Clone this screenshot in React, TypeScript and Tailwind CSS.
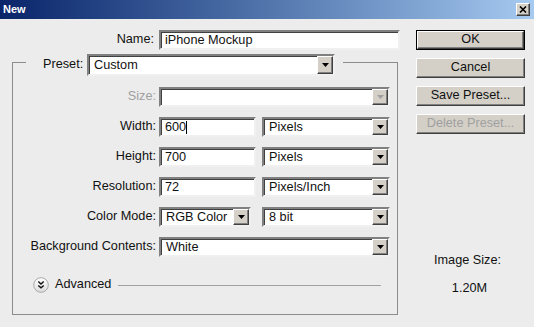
import React from 'react';

const sunken =
  'bg-white border-2 border-t-[#808080] border-l-[#808080] border-b-[#f0f0f0] border-r-[#f0f0f0] shadow-[inset_1px_1px_0_#404040]';

const raised =
  'bg-[#d4d0c8] border border-t-white border-l-white border-b-[#404040] border-r-[#404040] shadow-[inset_-1px_-1px_0_#808080]';

const Arrow: React.FC<{ disabled?: boolean }> = ({ disabled }) => (
  <div className={`w-[16px] self-stretch flex items-center justify-center ${raised}`}>
    <svg width="7" height="4" viewBox="0 0 7 4">
      <path d="M0 0 H7 L3.5 4 Z" fill={disabled ? '#a0a0a0' : '#000'} />
    </svg>
  </div>
);

const Select: React.FC<{ value?: string; width: string; disabled?: boolean; tall?: boolean }> = ({
  value,
  width,
  disabled,
  tall
}) => (
  <div
    className={`${width} ${tall ? 'h-[22px]' : 'h-[20px]'} flex items-stretch ${sunken} ${
      disabled ? 'bg-[#ececec]' : ''
    }`}
  >
    <div className="flex-1 flex items-center pl-[5px] leading-none">{value}</div>
    <Arrow disabled={disabled} />
  </div>
);

const Input: React.FC<{ value: string; width: string; cursor?: boolean }> = ({ value, width, cursor }) => (
  <div className={`${width} h-[20px] flex items-center pl-[4px] leading-none ${sunken}`}>
    {value}
    {cursor && <span className="inline-block w-px h-[13px] bg-black" />}
  </div>
);

const Row: React.FC<{ label: string; disabled?: boolean; children: React.ReactNode }> = ({
  label,
  disabled,
  children
}) => (
  <div className="flex items-center h-[20px]">
    <div className={`w-[146px] text-right pr-[3px] ${disabled ? 'text-[#a0a0a0]' : ''}`}>{label}</div>
    {children}
  </div>
);

const Button: React.FC<{ label: string; disabled?: boolean; def?: boolean }> = ({ label, disabled, def }) => {
  const inner = (
    <div
      className={`flex-1 flex items-center justify-center ${raised} ${disabled ? 'text-[#a0a0a0]' : ''}`}
    >
      {label}
    </div>
  );
  if (def) {
    return <div className="h-[20px] flex border border-black">{inner}</div>;
  }
  return <div className="h-[20px] flex">{inner}</div>;
};

export default function App() {
  return (
    <div className="w-[534px] h-[327px] bg-[#ececec] flex flex-col font-['Liberation_Sans',Arial,sans-serif] text-[12.7px] text-[#111] overflow-hidden">
      {/* Title bar */}
      <div className="h-[19px] flex items-center justify-between bg-gradient-to-r from-[#0a246a] to-[#a6caf0] pl-[3px] pr-[4px]">
        <span className="text-white font-bold text-[11px]">New</span>
        <div className={`w-[14px] h-[13px] flex items-center justify-center ${raised}`}>
          <svg width="8" height="7" viewBox="0 0 8 7">
            <path d="M1 0.5 L7 6.5 M7 0.5 L1 6.5" stroke="#000" strokeWidth="1.6" />
          </svg>
        </div>
      </div>

      <div className="flex flex-1 pt-[11px]">
        {/* Left column */}
        <div className="w-[400px] pl-[12px] flex flex-col">
          <div className="flex items-center h-[20px]">
            <div className="w-[147px] text-right pr-[5px]">Name:</div>
            <Input value="iPhone Mockup" width="w-[241px]" />
          </div>

          {/* Preset group */}
          <div className="mt-[4px] w-[386px] flex flex-col">
            <div className="h-[22px] flex items-start">
              <div className="w-[14px] h-[14px] mt-[8px] border-t border-l border-[#8c8c8c]" />
              <div className="h-[22px] flex items-center ml-[17px] w-[44px]">Preset:</div>
              <Select value="Custom" width="w-[248px]" tall />
              <div className="flex-1 h-[14px] mt-[8px] ml-[8px] border-t border-r border-[#8c8c8c]" />
            </div>
            <div className="h-[239px] border-l border-r border-b border-[#8c8c8c] pt-[11px] flex flex-col">
              <div className="flex flex-col gap-[10px]">
                <Row label="Size:" disabled>
                  <Select width="w-[231px]" disabled />
                </Row>
                <Row label="Width:">
                  <Input value="600" width="w-[97px]" cursor />
                  <div className="ml-[6px]">
                    <Select value="Pixels" width="w-[128px]" />
                  </div>
                </Row>
                <Row label="Height:">
                  <Input value="700" width="w-[97px]" />
                  <div className="ml-[6px]">
                    <Select value="Pixels" width="w-[128px]" />
                  </div>
                </Row>
                <Row label="Resolution:">
                  <Input value="72" width="w-[97px]" />
                  <div className="ml-[6px]">
                    <Select value="Pixels/Inch" width="w-[128px]" />
                  </div>
                </Row>
                <Row label="Color Mode:">
                  <Select value="RGB Color" width="w-[92px]" />
                  <div className="ml-[11px]">
                    <Select value="8 bit" width="w-[128px]" />
                  </div>
                </Row>
                <Row label="Background Contents:">
                  <Select value="White" width="w-[231px]" />
                </Row>
              </div>

              {/* Advanced */}
              <div className="mt-[20px] h-[16px] flex items-center pl-[20px] pr-[16px]">
                <svg width="16" height="16" viewBox="0 0 16 16">
                  <defs>
                    <linearGradient id="adv" x1="0" y1="0" x2="0" y2="1">
                      <stop offset="0" stopColor="#ffffff" />
                      <stop offset="1" stopColor="#dcdcdc" />
                    </linearGradient>
                  </defs>
                  <circle cx="8" cy="8" r="7.3" fill="url(#adv)" stroke="#a8a8a8" strokeWidth="1" />
                  <path
                    d="M5.3 4.6 L8 7 L10.7 4.6 M5.3 8.4 L8 10.8 L10.7 8.4"
                    fill="none"
                    stroke="#111"
                    strokeWidth="1.4"
                  />
                </svg>
                <span className="ml-[6px]">Advanced</span>
                <div className="flex-1 ml-[7px] h-px bg-[#a0a0a0]" />
              </div>
            </div>
          </div>
        </div>

        {/* Right column */}
        <div className="ml-[16px] w-[109px] flex flex-col">
          <div className="flex flex-col gap-[8px]">
            <Button label="OK" def />
            <Button label="Cancel" />
            <Button label="Save Preset..." />
            <Button label="Delete Preset..." disabled />
          </div>
          <div className="mt-[117px] flex flex-col items-center gap-[9px] pr-[6px]">
            <div>Image Size:</div>
            <div className="pl-[4px]">1.20M</div>
          </div>
        </div>
      </div>
    </div>
  );
}
